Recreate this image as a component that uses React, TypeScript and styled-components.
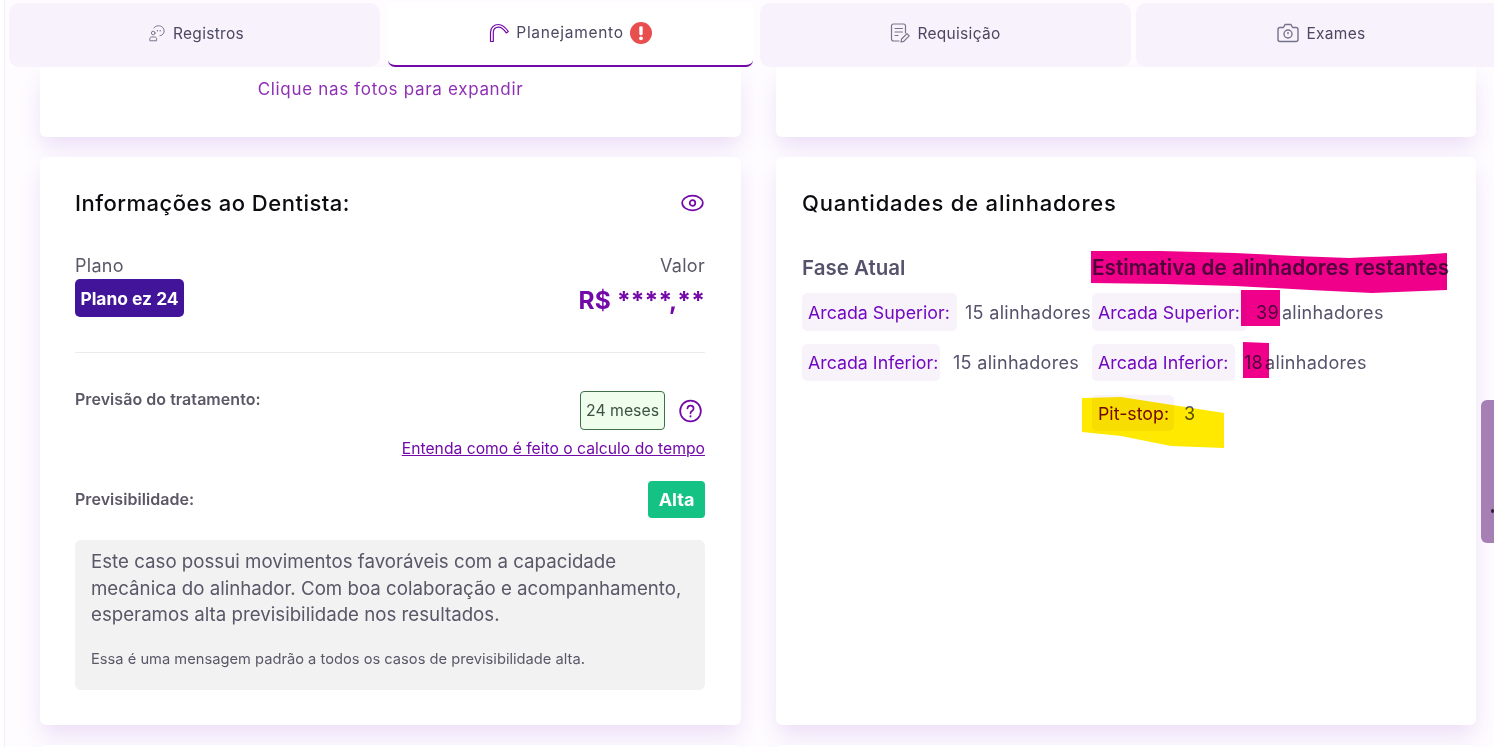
import styled, { createGlobalStyle } from "styled-components";

const GlobalStyle = createGlobalStyle`
  html, body {
    margin: 0;
    padding: 0;
    background: #fff;
  }
  * {
    box-sizing: border-box;
  }
  body {
    font-family: Inter, "Noto Sans", "Liberation Sans", sans-serif;
    color: #55526b;
  }
`;

const Page = styled.div`
  position: relative;
  width: 1494px;
  height: 747px;
  overflow: hidden;
  background: #fefcff;
  box-shadow: inset 4px 0 0 #fff, inset 5px 0 0 #f3ecf9;
`;

const TabBar = styled.div`
  position: relative;
  z-index: 2;
  display: flex;
  height: 67px;
  padding: 3px 0 0 9px;
`;

const Tab = styled.div<{ $width: number; $active?: boolean; $gap?: number; $inset?: number }>`
  flex: 0 0 ${(p) => p.$width}px;
  margin-right: ${(p) => p.$gap ?? 0}px;
  display: flex;
  align-items: center;
  justify-content: center;
  gap: ${(p) => (p.$active ? 6 : 7)}px;
  padding-left: ${(p) => p.$inset ?? 0}px;
  padding-bottom: ${(p) => (p.$active ? 3 : 4)}px;
  font-size: 15.5px;
  letter-spacing: ${(p) => (p.$active ? 0.7 : 0.3)}px;
  color: #4c4862;
  background: ${(p) => (p.$active ? "#fff" : "#f7f2fb")};
  border-radius: ${(p) => (p.$active ? "0 0 7px 7px" : "10px")};
  border-bottom: ${(p) => (p.$active ? "2px solid #7209a8" : "none")};
`;

const Grid = styled.div`
  display: grid;
  grid-template-columns: 701px 700px;
  grid-template-rows: 70px 568px 40px;
  column-gap: 35px;
  row-gap: 20px;
  padding-left: 40px;
`;

const Card = styled.section<{ $top?: boolean }>`
  position: relative;
  background: #fff;
  border-radius: ${(p) => (p.$top ? "0 0 6px 6px" : "6px")};
  box-shadow: 0 12px 22px -2px rgba(125, 40, 190, 0.14);
`;

const TopNote = styled.p`
  margin: 0;
  padding-top: 12px;
  text-align: center;
  font-size: 17px;
  letter-spacing: 0.68px;
  color: #8e2fb4;
`;

const InfoBody = styled.div`
  display: flex;
  flex-direction: column;
  padding: 32px 36px 0 35px;
`;

const CardHeader = styled.div`
  display: flex;
  align-items: center;
  justify-content: space-between;
  height: 27px;
  padding-right: 1px;
`;

const CardTitle = styled.h2`
  margin: 0;
  font-size: 22px;
  font-weight: 500;
  letter-spacing: 0.5px;
  color: #0b0b10;
`;

const QuantityTitle = styled(CardTitle)`
  letter-spacing: 0.8px;
`;

const PlanRow = styled.div`
  display: flex;
  justify-content: space-between;
  margin-top: 38px;
  padding-bottom: 35px;
  border-bottom: 1px solid #ebebed;
`;

const PlanColumn = styled.div<{ $right?: boolean }>`
  display: flex;
  flex-direction: column;
  align-items: ${(p) => (p.$right ? "flex-end" : "flex-start")};
`;

const SmallLabel = styled.span`
  font-size: 18px;
  line-height: 24px;
  letter-spacing: 0.3px;
  color: #5a5768;
`;

const PlanBadge = styled.span`
  display: flex;
  align-items: center;
  justify-content: center;
  width: 109px;
  height: 38px;
  margin-top: 1px;
  font-size: 17.4px;
  font-weight: 700;
  color: #fff;
  background: #42149a;
  border-radius: 5px;
`;

const PriceValue = styled.span`
  margin-top: 5px;
  font-size: 24.5px;
  line-height: 34px;
  font-weight: 700;
  letter-spacing: 0.15px;
  color: #7209a8;
`;

const ForecastRow = styled.div`
  display: flex;
  justify-content: space-between;
  margin-top: 38px;
  height: 39px;
`;

const BoldLabel = styled.span`
  margin-bottom: 2px;
  font-size: 16px;
  line-height: 16px;
  font-weight: 600;
  letter-spacing: 0.05px;
  color: #5b5766;
`;

const ForecastRight = styled.div`
  display: flex;
  align-items: center;
  gap: 14px;
  padding-right: 3px;
`;

const MonthsBox = styled.span`
  display: flex;
  align-items: center;
  justify-content: center;
  width: 85px;
  height: 39px;
  font-size: 15.8px;
  white-space: nowrap;
  color: #3f5142;
  background: #effdec;
  border: 1px solid #3f7048;
  border-radius: 4px;
`;

const ExplainLink = styled.a`
  align-self: flex-end;
  margin-top: 9px;
  font-size: 15.7px;
  line-height: 20px;
  color: #7209a8;
  text-decoration: underline;
`;

const ReliabilityRow = styled.div`
  display: flex;
  align-items: center;
  justify-content: space-between;
  margin-top: 22px;
`;

const ReliabilityTag = styled.span`
  display: flex;
  align-items: center;
  justify-content: center;
  width: 57px;
  height: 37px;
  font-size: 18px;
  font-weight: 700;
  color: #fff;
  background: #14c384;
  border-radius: 4px;
`;

const MessageBox = styled.div`
  height: 150px;
  margin-top: 22px;
  padding: 9px 0 0 16px;
  background: #f2f2f2;
  border-radius: 6px;
`;

const MessageText = styled.p`
  margin: 0;
  font-size: 18.7px;
  line-height: 26.5px;
  white-space: nowrap;
  color: #5a5768;
`;

const MessageNote = styled.p`
  margin: 20px 0 0;
  font-size: 14.7px;
  line-height: 20px;
  color: #5a5768;
`;

const QuantityBody = styled.div`
  display: flex;
  flex-direction: column;
  padding: 32px 26px 0;
`;

const QuantityGrid = styled.div`
  display: grid;
  grid-template-columns: 290px 1fr;
  margin-top: 39px;
`;

const QuantityColumn = styled.div`
  display: flex;
  flex-direction: column;
`;

const PhaseTitle = styled.h3<{ $size: number }>`
  margin: 0 0 12px;
  font-size: ${(p) => p.$size}px;
  line-height: 26px;
  font-weight: 600;
  white-space: nowrap;
  color: #55526b;
`;

const ArchRow = styled.div<{ $bottom: number; $gap: number }>`
  display: flex;
  align-items: center;
  gap: ${(p) => p.$gap}px;
  margin-bottom: ${(p) => p.$bottom}px;
  font-size: 18px;
  letter-spacing: 0.3px;
  white-space: nowrap;
  color: #55526b;
`;

const ArchLabel = styled.span<{ $width: number; $height: number }>`
  display: flex;
  align-items: center;
  width: ${(p) => p.$width}px;
  height: ${(p) => p.$height}px;
  padding-left: 6px;
  font-size: 17.8px;
  letter-spacing: 0;
  color: #7209c0;
  background: #f8f3fb;
  border-radius: 5px;
`;

const Remaining = styled.span<{ $gap: number }>`
  margin-right: ${(p) => p.$gap}px;
`;

const Annotation = styled.svg`
  position: absolute;
  top: 0;
  left: 0;
  width: 100%;
  height: 100%;
  pointer-events: none;
  mix-blend-mode: multiply;
`;

const SideHandle = styled.div`
  position: absolute;
  top: 400px;
  right: 0;
  z-index: 3;
  width: 13px;
  height: 143px;
  display: flex;
  align-items: center;
  justify-content: flex-end;
  background: #a67fb5;
  border-radius: 6px 0 0 6px;
`;

const HandleDot = styled.span`
  width: 3px;
  height: 4px;
  margin-top: 78px;
  background: #2f1a3a;
  border-radius: 50%;
`;

const RegistrosIcon = () => (
  <svg width="18" height="20" viewBox="0 0 20 20" fill="none" stroke="#77748a" strokeWidth="1.1" strokeLinecap="round">
    <path d="M6.500 4.500C8 2 12 1.200 15 2.800c2.500 1.400 3.600 4.400 2.500 7-.8 1.800-2.400 3-4.300 3.300" />
    <circle cx="5.800" cy="10" r="2" />
    <path d="M2 18.200v-1.700c0-1.300 1-2.100 2.300-2.100h3c1.300 0 2.300.8 2.300 2.100v1.700z" />
    <path d="M10.500 7.500h.01M13.500 7.500h.01" strokeWidth="1.600" />
  </svg>
);

const ArchIcon = () => (
  <svg width="21" height="20" viewBox="0 0 21 20" fill="none" stroke="#7209a8" strokeWidth="1.2" strokeLinejoin="round">
    <path d="M1.500 18.500V9.500C1.500 4.500 5 1.500 9.500 1.500c3.600 0 6.400 2.200 9.800 7l-2 1.400C14.200 5.800 12 4.200 9.700 4.200 6.500 4.200 4.300 6.300 4.300 9.700v8.800z" />
  </svg>
);

const AlertIcon = () => (
  <svg width="22" height="22" viewBox="0 0 22 22">
    <circle cx="11" cy="11" r="11" fill="#e84e4e" />
    <rect x="9.300" y="4.200" width="3.400" height="9" rx="1.400" fill="#fff" />
    <circle cx="11" cy="16.300" r="1.900" fill="#fff" />
  </svg>
);

const RequestIcon = () => (
  <svg width="20" height="20" viewBox="0 0 20 20" fill="none" stroke="#77748a" strokeWidth="1.2" strokeLinecap="round" strokeLinejoin="round">
    <path d="M9 18H3.500C2.500 18 1.500 17.200 1.500 16V3c0-1.100 1-2 2-2h10c1 0 2 .9 2 2v7" />
    <path d="M5 5.500h7.500M5 9h7.500M5 12.500h3" />
    <path d="M11 19l.6-3 5.400-5.400 2.200 2.200-5.400 5.500z" />
  </svg>
);

const CameraIcon = () => (
  <svg width="22" height="20" viewBox="0 0 22 20" fill="none" stroke="#77748a" strokeWidth="1.400" strokeLinejoin="round">
    <path d="M3 4.500h3.500L8 1.500h6l1.500 3H19c1.100 0 2 .9 2 2v10c0 1.100-.9 2-2 2H3c-1.100 0-2-.9-2-2v-10c0-1.100.9-2 2-2z" />
    <circle cx="11" cy="11" r="4" />
    <path d="M11 9v2.200" />
  </svg>
);

const EyeIcon = () => (
  <svg width="23" height="18" viewBox="0 0 23 18" fill="none" stroke="#7209a8" strokeWidth="1.700">
    <ellipse cx="11.500" cy="9" rx="10.300" ry="7.300" />
    <circle cx="11.500" cy="9" r="2.800" />
  </svg>
);

const HelpIcon = () => (
  <svg width="23" height="24" viewBox="0 0 24 24" fill="none" stroke="#7209a8" strokeWidth="1.800" strokeLinecap="round">
    <circle cx="12" cy="12" r="10.800" />
    <path d="M8.800 9.300c.3-1.800 1.500-2.800 3.200-2.800 1.800 0 3.200 1.200 3.200 2.800 0 1.300-.7 2-1.700 2.700-1 .6-1.500 1.200-1.500 2.400" />
    <path d="M12 17.600h.01" strokeWidth="2.200" />
  </svg>
);

const tabs = [
  { label: "Registros", icon: <RegistrosIcon />, width: 371, gap: 8, inset: 3 },
  { label: "Planejamento", icon: <ArchIcon />, width: 365, gap: 7, active: true },
  { label: "Requisição", icon: <RequestIcon />, width: 371, gap: 5 },
  { label: "Exames", icon: <CameraIcon />, width: 371 },
];

const App = () => {
  return (
    <Page>
      <GlobalStyle />
      <TabBar>
        {tabs.map((tab) => (
          <Tab key={tab.label} $width={tab.width} $gap={tab.gap} $active={tab.active} $inset={tab.inset}>
            {tab.icon}
            {tab.label}
            {tab.active && <AlertIcon />}
          </Tab>
        ))}
      </TabBar>
      <Grid>
        <Card $top>
          <TopNote>Clique nas fotos para expandir</TopNote>
        </Card>
        <Card $top />
        <Card>
          <InfoBody>
            <CardHeader>
              <CardTitle>Informações ao Dentista:</CardTitle>
              <EyeIcon />
            </CardHeader>
            <PlanRow>
              <PlanColumn>
                <SmallLabel>Plano</SmallLabel>
                <PlanBadge>Plano ez 24</PlanBadge>
              </PlanColumn>
              <PlanColumn $right>
                <SmallLabel>Valor</SmallLabel>
                <PriceValue>R$ ****,**</PriceValue>
              </PlanColumn>
            </PlanRow>
            <ForecastRow>
              <BoldLabel>Previsão do tratamento:</BoldLabel>
              <ForecastRight>
                <MonthsBox>24 meses</MonthsBox>
                <HelpIcon />
              </ForecastRight>
            </ForecastRow>
            <ExplainLink>Entenda como é feito o calculo do tempo</ExplainLink>
            <ReliabilityRow>
              <BoldLabel>Previsibilidade:</BoldLabel>
              <ReliabilityTag>Alta</ReliabilityTag>
            </ReliabilityRow>
            <MessageBox>
              <MessageText>
                Este caso possui movimentos favoráveis com a capacidade
                <br />
                mecânica do alinhador. Com boa colaboração e acompanhamento,
                <br />
                esperamos alta previsibilidade nos resultados.
              </MessageText>
              <MessageNote>Essa é uma mensagem padrão a todos os casos de previsibilidade alta.</MessageNote>
            </MessageBox>
          </InfoBody>
        </Card>
        <Card>
          <QuantityBody>
            <CardHeader>
              <QuantityTitle>Quantidades de alinhadores</QuantityTitle>
            </CardHeader>
            <QuantityGrid>
              <QuantityColumn>
                <PhaseTitle $size={20.5}>Fase Atual</PhaseTitle>
                <ArchRow $bottom={13} $gap={8}>
                  <ArchLabel $width={155} $height={38}>Arcada Superior:</ArchLabel>
                  15 alinhadores
                </ArchRow>
                <ArchRow $bottom={0} $gap={13}>
                  <ArchLabel $width={138} $height={37}>Arcada Inferior:</ArchLabel>
                  15 alinhadores
                </ArchRow>
              </QuantityColumn>
              <QuantityColumn>
                <PhaseTitle $size={20.8}>Estimativa de alinhadores restantes</PhaseTitle>
                <ArchRow $bottom={13} $gap={9}>
                  <ArchLabel $width={155} $height={38}>Arcada Superior:</ArchLabel>
                  <span>
                    <Remaining $gap={3}>39</Remaining>alinhadores
                  </span>
                </ArchRow>
                <ArchRow $bottom={14} $gap={9}>
                  <ArchLabel $width={143} $height={37}>Arcada Inferior:</ArchLabel>
                  <span>
                    <Remaining $gap={2}>18</Remaining>alinhadores
                  </span>
                </ArchRow>
                <ArchRow $bottom={0} $gap={10}>
                  <ArchLabel $width={82} $height={36}>Pit-stop:</ArchLabel>
                  3
                </ArchRow>
              </QuantityColumn>
            </QuantityGrid>
          </QuantityBody>
          <Annotation viewBox="0 0 700 568">
            <path
              fill="#f0008a"
              d="M315 94l70 0 74 2 60 3 54 2 68-3 30-2v37l-75 3-62-3-75-4-70-2-74-1z"
            />
            <path fill="#f0008a" d="M465 133l39 0v36h-39z" />
            <path fill="#f0008a" d="M467 185l26 1v35h-26z" />
            <path fill="#ffe900" d="M306 241l39-1 103 16v35l-53-2-50-10-39-4z" />
          </Annotation>
        </Card>
        <Card />
        <Card />
      </Grid>
      <SideHandle>
        <HandleDot />
      </SideHandle>
    </Page>
  );
};

export default App;
